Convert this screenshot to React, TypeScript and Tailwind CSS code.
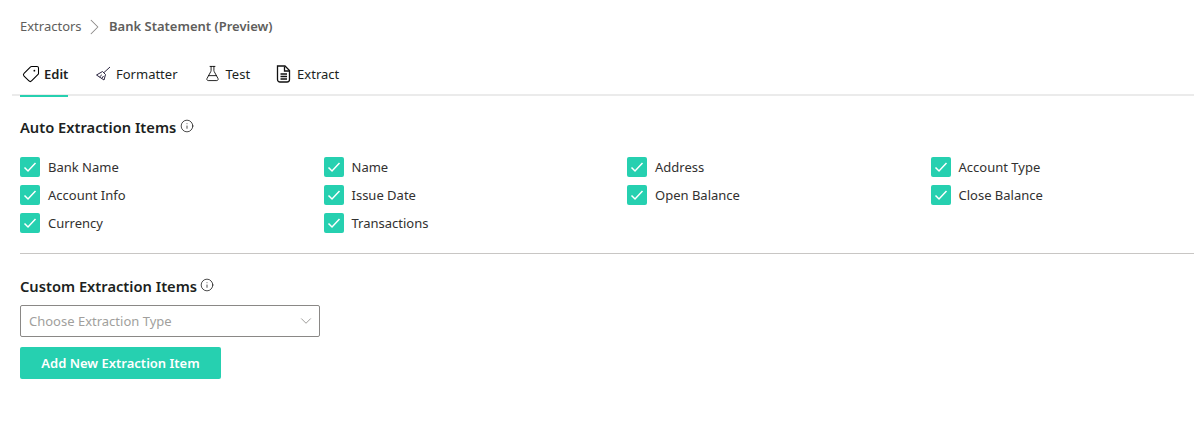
import { ChevronDown, ChevronRight, Info, Tag, FlaskConical } from "lucide-react";

const autoItems = [
  "Bank Name",
  "Name",
  "Address",
  "Account Type",
  "Account Info",
  "Issue Date",
  "Open Balance",
  "Close Balance",
  "Currency",
  "Transactions",
];

function BroomIcon() {
  return (
    <svg width="16" height="16" viewBox="0 0 16 16" fill="none" stroke="#2a2440" strokeWidth="1" className="shrink-0">
      <path d="M15 1 9 6.5" />
      <path d="M7.5 5.5 10.5 8.5 9 14 1.5 9 7.5 5.5Z" />
      <path d="M4.5 11 6.8 8.8M6.7 12.5 8.5 10" />
    </svg>
  );
}

function DocIcon() {
  return (
    <svg width="16" height="18" viewBox="0 0 16 18" fill="none" stroke="#111" strokeWidth="1.3" className="shrink-0">
      <path d="M1.5 1H9L13.5 5.5V14.5C13.5 15.9 12.4 17 11 17H4C2.6 17 1.5 15.9 1.5 14.5V1Z" />
      <path d="M8.5 1.5V6H13.5" />
      <path d="M4.5 9H11M4.5 11.5H11M4.5 14H11" />
    </svg>
  );
}

function CheckItem({ label }: { label: string }) {
  return (
    <label className="flex h-[28px] items-center gap-[8px]">
      <span className="flex h-[20px] w-[20px] items-center justify-center rounded-[2px] bg-[#26d0b0]">
        <svg width="14" height="12" viewBox="0 0 14 12" fill="none" stroke="#fff" strokeWidth="1.5">
          <path d="M1.5 6.5 5 10 12.5 2" />
        </svg>
      </span>
      <span className="pt-[2px] text-[13px] text-[#323130]">{label}</span>
    </label>
  );
}

export default function App() {
  return (
    <div className="h-[447px] w-[1194px] overflow-hidden bg-white font-['Noto_Sans',sans-serif] text-[#201f1e]">
      <div className="flex h-[53px] items-center px-[20px] text-[13px] text-[#605e5c]">
        <span className="w-[60px]">Extractors</span>
        <ChevronRight size={28} strokeWidth={0.9} className="mx-[1px] w-[27px] text-[#8a8886]" />
        <span className="font-semibold">Bank Statement (Preview)</span>
      </div>

      <div className="ml-[12px] flex h-[43px] items-center border-b-2 border-[#ebebeb] pl-[8px] text-[13px]">
        <div className="relative flex h-[43px] w-[48px] items-center gap-[4px] pl-[2px] font-semibold">
          <Tag size={18} strokeWidth={1.4} className="shrink-0 scale-x-[-1] text-black" />
          <span className="pt-[2px]">Edit</span>
          <div className="absolute bottom-[-2px] left-0 h-[2px] w-[48px] bg-[#26d0b0]" />
        </div>
        <div className="ml-[27px] flex items-center gap-[5px]">
          <BroomIcon />
          <span className="pt-[2px]">Formatter</span>
        </div>
        <div className="ml-[26px] flex items-center gap-[5px]">
          <FlaskConical size={17} strokeWidth={1.2} className="text-black" />
          <span className="pt-[2px]">Test</span>
        </div>
        <div className="ml-[26px] flex items-center gap-[5px]">
          <DocIcon />
          <span className="pt-[2px]">Extract</span>
        </div>
      </div>

      <div className="px-[20px]">
        <div className="mt-[21px] flex h-[21px] items-center gap-[4px] text-[14.7px] font-semibold">
          <span className="mb-[1px]">Auto Extraction Items</span>
          <Info size={14} strokeWidth={1.2} className="mb-[3px] text-black" />
        </div>
        <div className="mt-[15px] grid w-[1214px] grid-cols-4">
          {autoItems.map((item) => (
            <CheckItem key={item} label={item} />
          ))}
        </div>
        <div className="mt-[16px] mr-[-20px] border-t border-[#c8c6c4]" />
        <div className="mt-[22px] flex h-[21px] items-center gap-[3px] text-[14.7px] font-semibold">
          <span className="mb-[1px]">Custom Extraction Items</span>
          <Info size={14} strokeWidth={1.2} className="mb-[3px] text-black" />
        </div>
        <div className="mt-[8px] flex h-[32px] w-[300px] items-center justify-between rounded-[2px] border border-[#8a8886] pl-[8px] pr-[4px] text-[13px] text-[#a19f9d]">
          <span className="pt-[2px]">Choose Extraction Type</span>
          <ChevronDown size={18} strokeWidth={1.1} className="text-[#8a8886]" />
        </div>
        <button
          type="button"
          className="mt-[10px] flex h-[32px] w-[201px] items-center justify-center rounded-[2px] bg-[#26d0b0] pt-[2px] text-[13px] font-semibold text-white"
        >
          Add New Extraction Item
        </button>
      </div>
    </div>
  );
}
